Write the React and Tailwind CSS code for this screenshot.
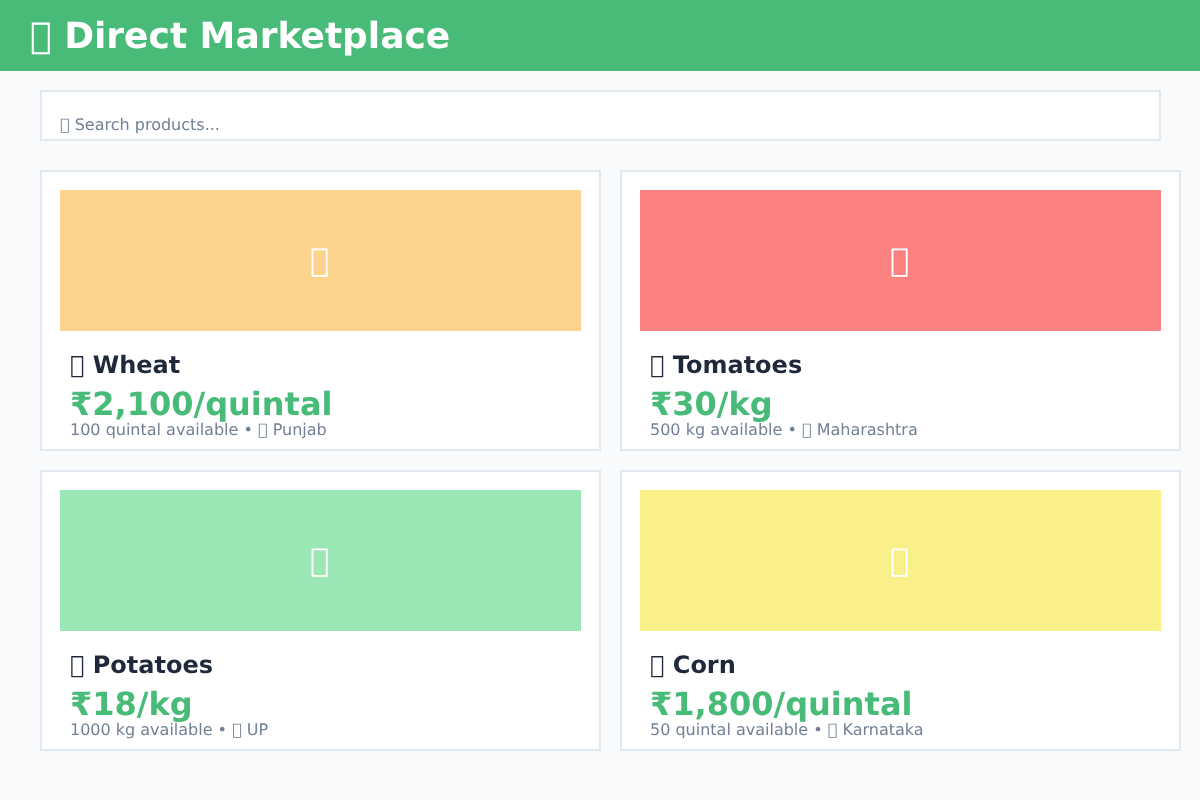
// the reference shows missing-glyph boxes where its emoji were, so a private use character stands in for them
const box = '\uE000';

const products = [
  { name: 'Wheat', price: '₹2,100/quintal', stock: '100 quintal available', place: 'Punjab', color: 'bg-[#fbd38d]' },
  { name: 'Tomatoes', price: '₹30/kg', stock: '500 kg available', place: 'Maharashtra', color: 'bg-[#fc8181]' },
  { name: 'Potatoes', price: '₹18/kg', stock: '1000 kg available', place: 'UP', color: 'bg-[#9ae6b4]' },
  { name: 'Corn', price: '₹1,800/quintal', stock: '50 quintal available', place: 'Karnataka', color: 'bg-[#faf089]' }
];

export default function App() {
  return (
    <div className="h-[800px] overflow-hidden bg-[#f9fafb] font-['DejaVu_Sans',sans-serif] [text-rendering:geometricPrecision] will-change-transform">
      <header className="flex h-[71px] items-center bg-[#48bb78] pt-[2px] pl-[30px]">
        <h1 className="text-[36px] leading-[42px] font-bold text-white">{box} Direct Marketplace</h1>
      </header>

      <main className="pt-[19px] pl-[40px]">
        <div className="h-[51px] w-[1121px] border-2 border-[#e2e8f0] bg-white pt-[24px] pl-[18px] text-[16px] leading-[18px] text-[#718096]">
          {box} Search products...
        </div>

        <div className="mt-[29px] grid grid-cols-[561px_561px] gap-[19px]">
          {products.map((product) => (
            <div key={product.name} className="h-[281px] border-2 border-[#e2e8f0] bg-white p-[18px]">
              <div className={`flex h-[141px] items-center justify-center pr-[2px] pb-[2px] text-[32px] text-white ${product.color}`}>
                {box}
              </div>
              <div className="px-[10px] pt-[19px]">
                <h3 className="text-[24px] leading-[30px] font-bold text-[#1e293b]">{box} {product.name}</h3>
                <div className="mt-[6px] text-[32px] leading-[36px] font-bold text-[#48bb78]">{product.price}</div>
                <div className="text-[16px] leading-[16px] text-[#718096]">{product.stock} • {box} {product.place}</div>
              </div>
            </div>
          ))}
        </div>
      </main>
    </div>
  );
}
